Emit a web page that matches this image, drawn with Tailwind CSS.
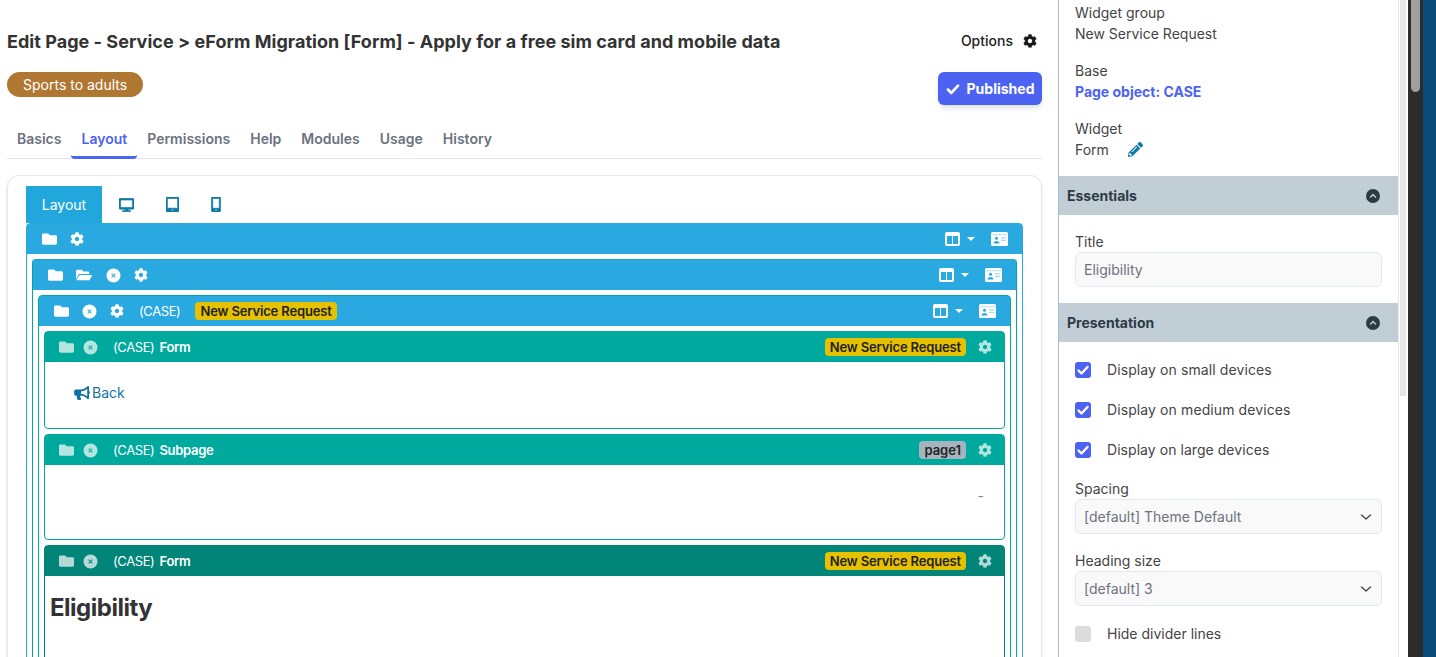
<!DOCTYPE html>
<html lang="en">
<head>
  <meta charset="UTF-8" />
  <meta name="viewport" content="width=device-width, initial-scale=1.0" />
  <script src="https://cdn.jsdelivr.net/npm/@tailwindcss/browser@4"></script>
  <title>Edit Page</title>
</head>
<body class="font-['Inter',sans-serif] text-[#333] text-sm bg-white">

  <!-- Icon set -->
  <svg class="hidden">
    <symbol id="i-cog" viewBox="0 0 512 512"><path fill="currentColor" d="M487.4 315.7l-42.6-24.6c4.3-23.2 4.3-47 0-70.2l42.6-24.6c4.9-2.8 7.1-8.6 5.5-14-11.1-35.6-30-67.8-54.7-94.6-3.8-4.1-10-5.1-14.8-2.3L380.8 110c-17.9-15.4-38.5-27.3-60.8-35.1V25.8c0-5.6-3.9-10.5-9.4-11.7-36.7-8.2-74.3-7.8-109.2 0-5.5 1.2-9.4 6.1-9.4 11.7V75c-22.2 7.9-42.8 19.8-60.8 35.1L88.7 85.5c-4.9-2.8-11-1.9-14.8 2.3-24.7 26.7-43.6 58.9-54.7 94.6-1.7 5.4.6 11.2 5.5 14L67.3 221c-4.3 23.2-4.3 47 0 70.2l-42.6 24.6c-4.9 2.8-7.1 8.6-5.5 14 11.1 35.6 30 67.8 54.7 94.6 3.8 4.1 10 5.1 14.8 2.3l42.6-24.6c17.9 15.4 38.5 27.3 60.8 35.1v49.2c0 5.6 3.9 10.5 9.4 11.7 36.7 8.2 74.3 7.8 109.2 0 5.5-1.2 9.4-6.1 9.4-11.7v-49.2c22.2-7.9 42.8-19.8 60.8-35.1l42.6 24.6c4.9 2.8 11 1.9 14.8-2.3 24.7-26.7 43.6-58.9 54.7-94.6 1.5-5.5-.7-11.3-5.6-14.1zM256 336c-44.1 0-80-35.9-80-80s35.9-80 80-80 80 35.9 80 80-35.9 80-80 80z"/></symbol>
    <symbol id="i-folder" viewBox="0 0 512 512"><path fill="currentColor" d="M464 128H272l-64-64H48C21.49 64 0 85.49 0 112v288c0 26.51 21.49 48 48 48h416c26.51 0 48-21.49 48-48V176c0-26.51-21.49-48-48-48z"/></symbol>
    <symbol id="i-folder-open" viewBox="0 0 576 512"><path fill="currentColor" d="M572.694 292.093L500.27 416.248A63.997 63.997 0 0 1 444.989 448H45.025c-18.523 0-30.064-20.093-20.731-36.093l72.424-124.155A64 64 0 0 1 152 256h399.964c18.523 0 30.064 20.093 20.73 36.093zM152 224h328v-48c0-26.51-21.49-48-48-48H272l-64-64H48C21.49 64 0 85.49 0 112v278.046l69.077-118.418C86.214 242.25 117.989 224 152 224z"/></symbol>
    <symbol id="i-times" viewBox="0 0 16 16"><path fill="currentColor" fill-rule="evenodd" d="M8 .5a7.500 7.500 0 1 0 0 15A7.500 7.500 0 0 0 8 .5zM6.400 5.700 8 7.300l1.600-1.600.7.7L8.700 8l1.600 1.600-.7.7L8 8.700l-1.600 1.600-.7-.7L7.300 8 5.700 6.400z"/></symbol>
    <symbol id="i-desktop" viewBox="0 0 576 512"><path fill="currentColor" stroke="currentColor" stroke-width="24" d="M528 0H48C21.5 0 0 21.5 0 48v320c0 26.5 21.5 48 48 48h192l-16 48h-72c-13.3 0-24 10.7-24 24s10.7 24 24 24h272c13.3 0 24-10.700 24-24s-10.700-24-24-24h-72l-16-48h192c26.500 0 48-21.500 48-48V48c0-26.500-21.500-48-48-48zm-16 352H64V64h448v288z"/></symbol>
    <symbol id="i-tablet" viewBox="0 0 448 512"><path fill="currentColor" stroke="currentColor" stroke-width="24" d="M400 0H48C21.500 0 0 21.500 0 48v416c0 26.500 21.500 48 48 48h352c26.500 0 48-21.500 48-48V48c0-26.500-21.500-48-48-48zM224 480c-17.700 0-32-14.300-32-32s14.300-32 32-32 32 14.300 32 32-14.300 32-32 32zm176-108c0 6.600-5.400 12-12 12H60c-6.600 0-12-5.400-12-12V60c0-6.600 5.400-12 12-12h328c6.600 0 12 5.400 12 12v312z"/></symbol>
    <symbol id="i-mobile" viewBox="0 0 320 512"><path fill="currentColor" stroke="currentColor" stroke-width="24" d="M272 0H48C21.500 0 0 21.500 0 48v416c0 26.500 21.500 48 48 48h224c26.500 0 48-21.500 48-48V48c0-26.500-21.500-48-48-48zM160 480c-17.700 0-32-14.300-32-32s14.300-32 32-32 32 14.300 32 32-14.300 32-32 32zm112-108c0 6.600-5.400 12-12 12H60c-6.600 0-12-5.400-12-12V60c0-6.600 5.400-12 12-12h200c6.600 0 12 5.400 12 12v312z"/></symbol>
    <symbol id="i-bullhorn" viewBox="0 0 576 512"><path fill="currentColor" d="M576 240c0-23.630-12.950-44.040-32-55.120V32.010C544 23.260 537.020 0 512 0c-7.120 0-14.190 2.380-19.980 7.020l-85.030 68.030C364.280 109.190 310.660 128 256 128H64c-35.350 0-64 28.650-64 64v96c0 35.350 28.650 64 64 64h33.700c-1.390 10.480-2.180 21.140-2.180 32 0 39.770 9.260 77.350 25.560 110.940 5.190 10.690 16.520 17.060 28.400 17.060h74.280c26.050 0 41.690-29.840 25.900-50.560-16.400-21.520-26.150-48.360-26.150-77.440 0-11.110 1.620-21.790 4.410-32H256c54.660 0 108.280 18.810 150.980 52.950l85.030 68.030a32.023 32.023 0 0 0 19.980 7.020c24.920 0 32-22.780 32-32V295.130C563.050 284.040 576 263.630 576 240zm-96 141.420l-33.050-26.440C392.950 311.780 325.120 288 256 288v-96c69.120 0 136.950-23.780 190.950-66.980L480 98.580v282.840z"/></symbol>
    <symbol id="i-pencil" viewBox="0 0 512 512"><path fill="currentColor" d="M497.900 142.100l-46.100 46.100c-4.700 4.700-12.300 4.700-17 0l-111-111c-4.700-4.700-4.700-12.300 0-17l46.100-46.100c18.700-18.700 49.100-18.700 67.900 0l60.100 60.100c18.800 18.700 18.800 49.100 0 67.900zM284.200 99.800L21.600 362.400.4 483.900c-2.900 16.400 11.400 30.600 27.800 27.800l121.500-21.300 262.600-262.600c4.700-4.700 4.700-12.300 0-17l-111-111c-4.800-4.700-12.400-4.700-17.100 0zM124.100 339.900c-5.500-5.500-5.500-14.300 0-19.800l154-154c5.500-5.500 14.300-5.500 19.800 0s5.500 14.300 0 19.800l-154 154c-5.500 5.500-14.300 5.500-19.800 0zM88 424h48v36.300l-64.500 11.300-31.100-31.100L51.700 376H88v48z"/></symbol>
    <symbol id="i-columns" viewBox="0 0 15 14"><path fill="currentColor" fill-rule="evenodd" d="M2 0h11a2 2 0 0 1 2 2v10a2 2 0 0 1-2 2H2a2 2 0 0 1-2-2V2a2 2 0 0 1 2-2zM2 4v8h5V4zm6 0v8h5V4z"/></symbol>
    <symbol id="i-card" viewBox="0 0 17 14">
      <rect width="17" height="14" rx="1.500" fill="currentColor"/>
      <rect x="1" y="2.500" width="15" height=".6" fill="#29a9e0" opacity=".6"/>
      <circle cx="5.500" cy="6.300" r="1.500" fill="#29a9e0"/>
      <path fill="#29a9e0" d="M2.500 11.500c0-1.600 1.300-2.600 3-2.600s3 1 3 2.600z"/>
      <path fill="#a8dcf2" d="M10 5.200h5v1.300h-5zM10 7.700h5v1.300h-5z"/>
    </symbol>
    <symbol id="i-check" viewBox="0 0 16 16"><path fill="none" stroke="currentColor" stroke-width="2.400" stroke-linecap="round" stroke-linejoin="round" d="M3.500 8.500l3 3 6-6.500"/></symbol>
    <symbol id="i-collapse" viewBox="0 0 16 16"><path fill="currentColor" fill-rule="evenodd" d="M8 1a7 7 0 1 0 0 14A7 7 0 0 0 8 1zM8 5.600l3.400 3.300-1 1L8 7.600 5.600 9.900l-1-1z"/></symbol>
    <symbol id="i-chevron" viewBox="0 0 16 16"><path fill="none" stroke="currentColor" stroke-width="1.300" stroke-linecap="round" stroke-linejoin="round" d="M3.500 6l4.500 4L12.500 6"/></symbol>
  </svg>

  <div class="flex h-[657px] overflow-hidden">

    <!-- Main column -->
    <main class="w-[1058px] shrink-0 pl-[7px] pr-4">
      <div class="flex justify-between items-center pt-[30px] h-[52px]">
        <h1 class="text-lg font-bold leading-[22px] pt-[2px] tracking-[0.035px] text-[#333]">Edit Page - Service &gt; eForm Migration [Form] - Apply for a free sim card and mobile data</h1>
        <div class="flex items-center gap-[10px] pr-[5px] text-[#222] font-medium">
          <span>Options</span>
          <svg class="w-[14px] h-[14px] text-[#1a1a1a]"><use href="#i-cog"/></svg>
        </div>
      </div>

      <div class="flex justify-between items-start mt-5">
        <span class="h-[25px] px-4 rounded-full bg-[#b07732] text-white leading-[25px]">Sports to adults</span>
        <button class="h-[33px] w-[104px] pr-[2px] flex items-center justify-center gap-[5px] rounded-md bg-[#4c63f2] text-white font-bold shadow-md">
          <svg class="w-[18px] h-[18px]"><use href="#i-check"/></svg>
          Published
        </button>
      </div>

      <!-- Page tabs -->
      <nav class="flex mt-[19px] h-[35px] border-b border-[#e2e8f0] font-semibold text-[#6b7280]">
        <a class="px-[10px] pt-[5px]">Basics</a>
        <a class="px-[10px] pt-[5px] h-[35px] text-[#4c63f2] border-b-[3px] border-[#4c63f2] rounded-b-sm">Layout</a>
        <a class="px-[10px] pt-[5px]">Permissions</a>
        <a class="px-[10px] pt-[5px]">Help</a>
        <a class="px-[10px] pt-[5px]">Modules</a>
        <a class="px-[10px] pt-[5px]">Usage</a>
        <a class="px-[10px] pt-[5px]">History</a>
      </nav>

      <!-- Layout card -->
      <section class="mt-4 h-[600px] border border-[#e5e7eb] rounded-xl pt-[10px] px-[18px] shadow-sm">
        <div class="flex items-stretch h-[37px] text-[#0e7aa5]">
          <span class="w-[76px] bg-[#22a7dc] text-white flex items-center justify-center">Layout</span>
          <span class="flex items-center ml-[17px]"><svg class="w-[15px] h-[14px]"><use href="#i-desktop"/></svg></span>
          <span class="flex items-center ml-[32px]"><svg class="w-[13px] h-[15px]"><use href="#i-tablet"/></svg></span>
          <span class="flex items-center ml-[32px]"><svg class="w-[10px] h-[15px]"><use href="#i-mobile"/></svg></span>
        </div>

        <!-- Level 1 -->
        <div class="border border-[#29a9e0] rounded-t-sm pb-5">
          <div class="h-[30px] bg-[#29a9e0] text-white flex items-center pl-[15px] pr-[14px]">
            <svg class="w-[15px] h-4"><use href="#i-folder"/></svg>
            <svg class="w-[14px] h-[14px] ml-[13px]"><use href="#i-cog"/></svg>
            <svg class="w-[15px] h-[14px] ml-auto"><use href="#i-columns"/></svg>
            <span class="ml-[7px] border-x-4 border-t-4 border-x-transparent border-t-white"></span>
            <svg class="w-[17px] h-[14px] ml-4"><use href="#i-card"/></svg>
          </div>

          <!-- Level 2 -->
          <div class="mt-[5px] mx-[5px] border border-[#00a99d] border-t-[#1aa8b8] rounded-t-sm pb-5">
            <div class="h-[30px] bg-[#29a9e0] text-white flex items-center pl-[15px] pr-[14px]">
              <svg class="w-[15px] h-4"><use href="#i-folder"/></svg>
              <svg class="w-4 h-4 ml-[13px]"><use href="#i-folder-open"/></svg>
              <svg class="w-[15px] h-[15px] ml-[14px]"><use href="#i-times"/></svg>
              <svg class="w-[14px] h-[14px] ml-[13px]"><use href="#i-cog"/></svg>
              <svg class="w-[15px] h-[14px] ml-auto"><use href="#i-columns"/></svg>
              <span class="ml-[7px] border-x-4 border-t-4 border-x-transparent border-t-white"></span>
              <svg class="w-[17px] h-[14px] ml-4"><use href="#i-card"/></svg>
            </div>

            <!-- Level 3 -->
            <div class="mt-[5px] mx-[5px] border border-[#00a99d] rounded-t-sm pb-5">
              <div class="h-[30px] bg-[#29a9e0] text-white flex items-center pl-[15px] pr-[14px]">
                <svg class="w-[15px] h-4"><use href="#i-folder"/></svg>
                <svg class="w-[15px] h-[15px] ml-[13px]"><use href="#i-times"/></svg>
                <svg class="w-[14px] h-[14px] ml-[13px]"><use href="#i-cog"/></svg>
                <span class="ml-[15px] text-[13px] tracking-[-0.4px]">(CASE)</span>
                <span class="ml-[15px] h-[18px] px-[5px] rounded bg-[#e5c100] text-[#222] text-[13px] tracking-[-0.15px] leading-[18px] font-semibold">New Service Request</span>
                <svg class="w-[15px] h-[14px] ml-auto"><use href="#i-columns"/></svg>
                <span class="ml-[7px] border-x-4 border-t-4 border-x-transparent border-t-white"></span>
                <svg class="w-[17px] h-[14px] ml-4"><use href="#i-card"/></svg>
              </div>

              <!-- Widgets -->
              <div class="mt-[5px] mx-[5px] h-[98px] border border-[#00a99d] rounded-sm">
                <div class="h-[30px] bg-[#00a99d] text-white flex items-center pl-[14px] pr-[12px]">
                  <svg class="w-[15px] h-4 opacity-70"><use href="#i-folder"/></svg>
                  <svg class="w-[15px] h-[15px] ml-[9px] opacity-70"><use href="#i-times"/></svg>
                  <span class="ml-[15px] text-[13px] tracking-[-0.4px]">(CASE)</span>
                  <span class="ml-[5px] text-[13px] tracking-[-0.3px] font-semibold">Form</span>
                  <span class="ml-auto h-[18px] px-[5px] rounded bg-[#e5c100] text-[#222] text-[13px] tracking-[-0.15px] leading-[18px] font-semibold">New Service Request</span>
                  <svg class="w-[14px] h-[14px] ml-3 opacity-70"><use href="#i-cog"/></svg>
                </div>
                <div class="pl-[29px] pt-[21px] flex items-center gap-[2px] text-[#1273a0]">
                  <svg class="w-4 h-[14px]"><use href="#i-bullhorn"/></svg>
                  <span>Back</span>
                </div>
              </div>

              <div class="mt-[5px] mx-[5px] h-[106px] border border-[#00a99d] rounded-sm">
                <div class="h-[30px] bg-[#00a99d] text-white flex items-center pl-[14px] pr-[12px]">
                  <svg class="w-[15px] h-4 opacity-70"><use href="#i-folder"/></svg>
                  <svg class="w-[15px] h-[15px] ml-[9px] opacity-70"><use href="#i-times"/></svg>
                  <span class="ml-[15px] text-[13px] tracking-[-0.4px]">(CASE)</span>
                  <span class="ml-[5px] text-[13px] tracking-[-0.3px] font-semibold">Subpage</span>
                  <span class="ml-auto h-[18px] px-[5px] rounded bg-[#a6b2bd] text-[#222] text-[13px] leading-[18px] font-semibold">page1</span>
                  <svg class="w-[14px] h-[14px] ml-3 opacity-70"><use href="#i-cog"/></svg>
                </div>
                <div class="flex justify-end pr-5 pt-[22px] text-sm text-[#888] leading-[18px]">-</div>
              </div>

              <div class="mt-[5px] mx-[5px] border border-[#008578] rounded-sm pb-10">
                <div class="h-[30px] bg-[#008578] text-white flex items-center pl-[14px] pr-[12px]">
                  <svg class="w-[15px] h-4 opacity-70"><use href="#i-folder"/></svg>
                  <svg class="w-[15px] h-[15px] ml-[9px] opacity-70"><use href="#i-times"/></svg>
                  <span class="ml-[15px] text-[13px] tracking-[-0.4px]">(CASE)</span>
                  <span class="ml-[5px] text-[13px] tracking-[-0.3px] font-semibold">Form</span>
                  <span class="ml-auto h-[18px] px-[5px] rounded bg-[#e5c100] text-[#222] text-[13px] tracking-[-0.15px] leading-[18px] font-semibold">New Service Request</span>
                  <svg class="w-[14px] h-[14px] ml-3 opacity-70"><use href="#i-cog"/></svg>
                </div>
                <h2 class="pl-[5px] pt-4 text-2xl font-bold tracking-[-0.5px] text-[#333]">Eligibility</h2>
              </div>
            </div>
          </div>
        </div>
      </section>
    </main>

    <!-- Settings panel -->
    <aside class="w-[341px] shrink-0 border-l border-r border-l-[#a9bcc9] border-r-[#e5e7eb] text-[#444]">
      <div class="px-4 pt-[2px]">
        <p class="leading-[21px]">Widget group</p>
        <p class="leading-[21px]">New Service Request</p>
        <p class="leading-[21px] mt-4">Base</p>
        <p class="leading-[21px] text-[#4c63f2] font-bold">Page object: CASE</p>
        <p class="leading-[21px] mt-4">Widget</p>
        <p class="leading-[21px] flex items-center gap-[19px]">Form <svg class="w-[15px] h-[15px] text-[#0e7aa5]"><use href="#i-pencil"/></svg></p>
      </div>

      <div class="mt-4 h-[39px] bg-[#c1ced6] flex items-center justify-between px-2 pr-[17px] font-bold text-[#2d3a45]">
        <span>Essentials</span>
        <svg class="w-4 h-4"><use href="#i-collapse"/></svg>
      </div>
      <div class="px-4 pt-4 pb-4">
        <label class="block leading-[21px]">Title</label>
        <input value="Eligibility" readonly class="block w-full h-[35px] px-2 rounded-md border border-[#e2e8f0] bg-[#f9f9f9] text-[#6b7280] outline-none" />
      </div>

      <div class="h-[39px] bg-[#c1ced6] flex items-center justify-between px-2 pr-[17px] font-bold text-[#2d3a45]">
        <span>Presentation</span>
        <svg class="w-4 h-4"><use href="#i-collapse"/></svg>
      </div>
      <div class="px-4 pt-5">
        <div class="flex items-center gap-4 h-4">
          <span class="w-4 h-4 rounded-[3px] bg-[#4c63f2] text-white"><svg class="w-4 h-4"><use href="#i-check"/></svg></span>
          <span class="tracking-[0.1px]">Display on small devices</span>
        </div>
        <div class="flex items-center gap-4 h-4 mt-6">
          <span class="w-4 h-4 rounded-[3px] bg-[#4c63f2] text-white"><svg class="w-4 h-4"><use href="#i-check"/></svg></span>
          <span class="tracking-[0.1px]">Display on medium devices</span>
        </div>
        <div class="flex items-center gap-4 h-4 mt-6">
          <span class="w-4 h-4 rounded-[3px] bg-[#4c63f2] text-white"><svg class="w-4 h-4"><use href="#i-check"/></svg></span>
          <span class="tracking-[0.05px]">Display on large devices</span>
        </div>

        <label class="block leading-[21px] mt-5">Spacing</label>
        <div class="flex items-center justify-between h-[35px] px-2 pr-[7px] rounded-md border border-[#e2e8f0] bg-[#f9f9f9] text-[#6b7280]">
          <span>[default] Theme Default</span>
          <svg class="w-4 h-4 text-[#444]"><use href="#i-chevron"/></svg>
        </div>

        <label class="block leading-[21px] mt-4">Heading size</label>
        <div class="flex items-center justify-between h-[35px] px-2 pr-[7px] rounded-md border border-[#e2e8f0] bg-[#f9f9f9] text-[#6b7280]">
          <span>[default] 3</span>
          <svg class="w-4 h-4 text-[#444]"><use href="#i-chevron"/></svg>
        </div>

        <div class="flex items-center gap-4 h-4 mt-5">
          <span class="w-4 h-4 rounded-[3px] bg-[#dcdcdc]"></span>
          <span>Hide divider lines</span>
        </div>
      </div>
    </aside>

    <!-- Panel scrollbar -->
    <div class="w-[9px] shrink-0 pl-px pr-[2px]">
      <div class="h-[396px] bg-[#e6e6e6]"></div>
    </div>

    <!-- Window scrollbar and edge of next window -->
    <div class="w-[15px] shrink-0 bg-[#2c2c2c] px-[3px]">
      <div class="h-[92px] bg-[#9f9f9f] rounded-b-md"></div>
    </div>
    <div class="flex-1 bg-[#0a4a78]"></div>
  </div>

</body>
</html>
